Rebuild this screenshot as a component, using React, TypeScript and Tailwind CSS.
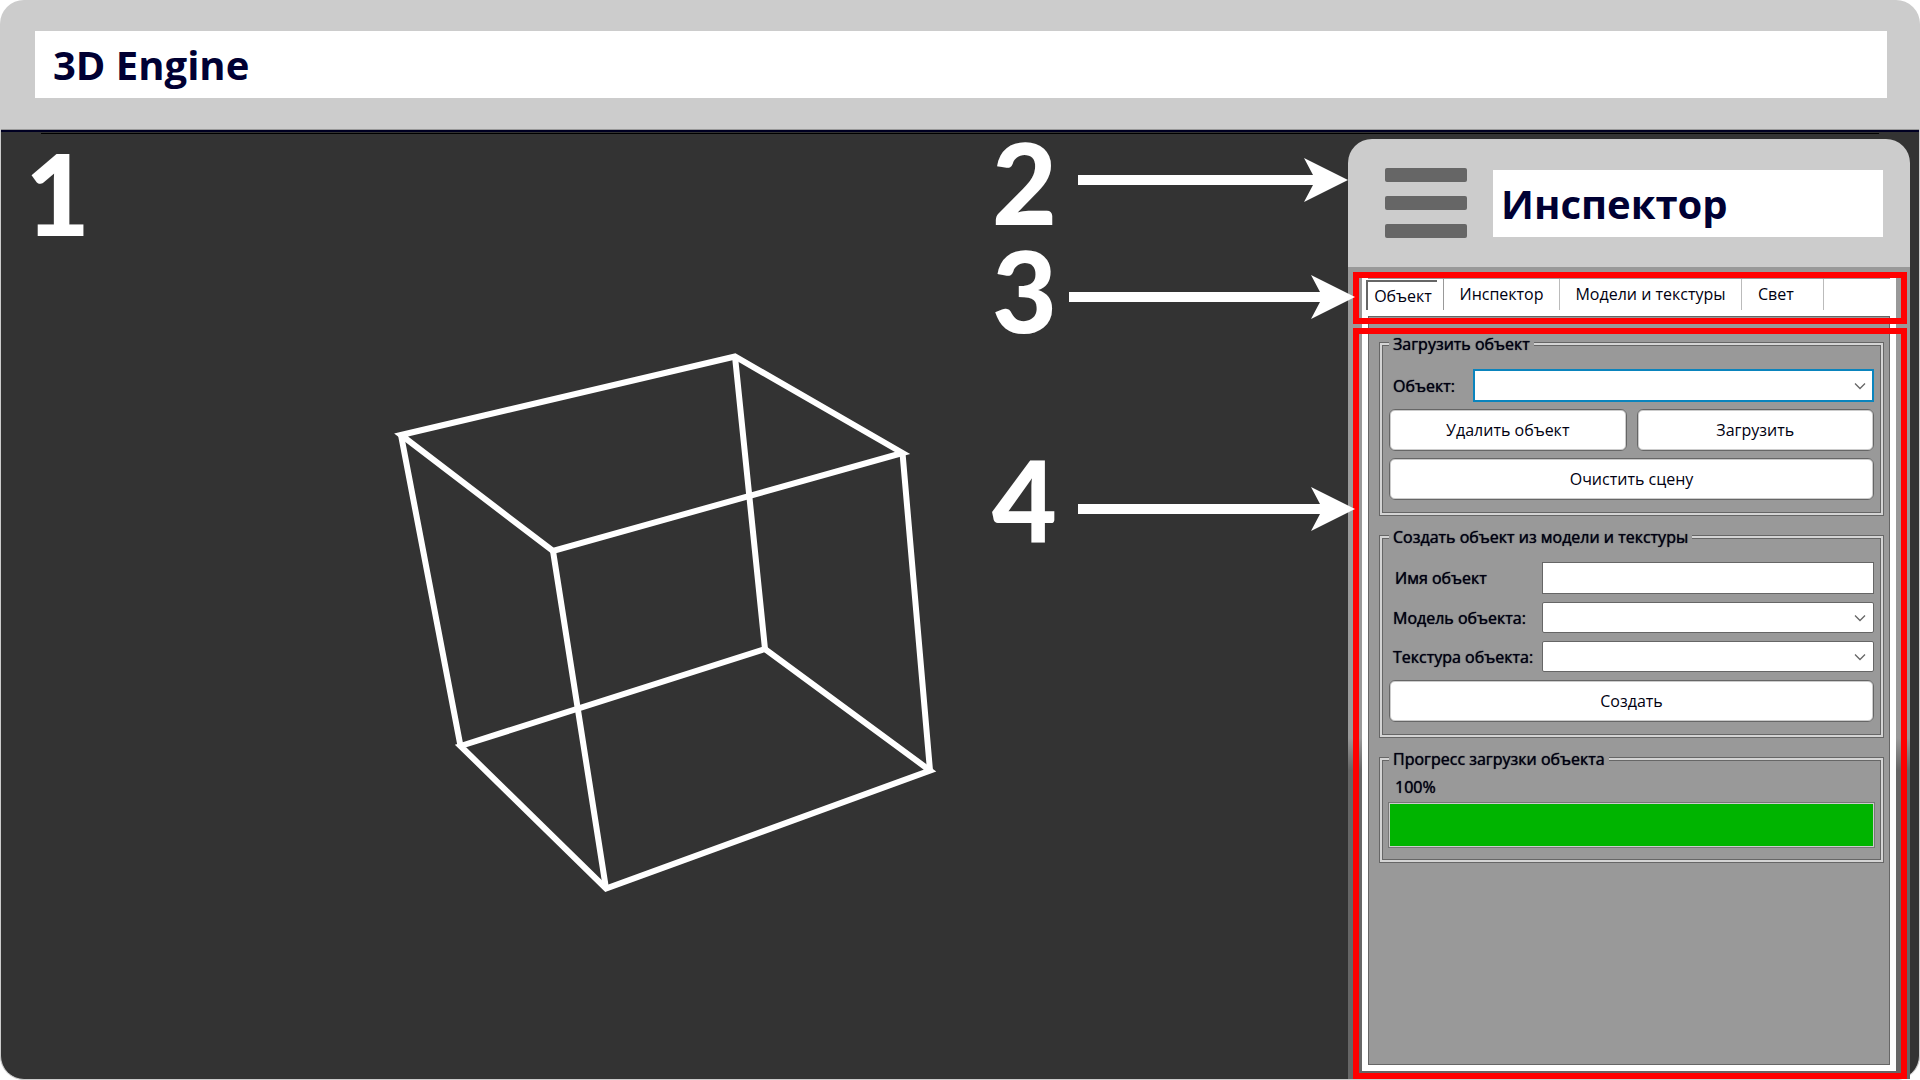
import type { ReactNode } from "react";

const ink = "text-[#000033]";
const heavy = "[text-shadow:0_0_1px_#000011]";

function Chevron() {
  return (
    <svg
      className="pointer-events-none absolute top-1/2 right-2 h-2 w-3 -translate-y-1/2"
      viewBox="0 0 12 8"
      fill="none"
      stroke="#666666"
      aria-hidden="true"
    >
      <path d="M1 1.5 L6 6.5 L11 1.5" strokeWidth="1.3" />
    </svg>
  );
}

function Combo({ id, active = false }: { id: string; active?: boolean }) {
  return (
    <div className="relative min-w-0 flex-1">
      <select
        id={id}
        className={
          active
            ? "block h-[33px] w-full appearance-none border-2 border-[#0a84bd] bg-white px-2 outline-none"
            : "block h-[31px] w-full appearance-none rounded-xs border border-[#666666] bg-white px-2 outline-none"
        }
      >
        <option value=""></option>
      </select>
      <Chevron />
    </div>
  );
}

function PushButton({ children }: { children: ReactNode }) {
  return (
    <button
      type="button"
      className="h-[42px] flex-1 rounded-md border border-[#666666] bg-white text-center shadow-[inset_0_0_0_1px_#cccccc]"
    >
      {children}
    </button>
  );
}

function Group({ title, children }: { title: string; children: ReactNode }) {
  return (
    <fieldset className="min-w-0 border-2 border-[#d4d4d4] px-[7px] pb-[13px] shadow-[0_0_0_1px_#666666,inset_0_0_0_1px_#666666]">
      <legend className={`bg-[#999999] px-1 leading-6 ${heavy}`}>{title}</legend>
      {children}
    </fieldset>
  );
}

function Cube() {
  return (
    <svg
      className="absolute top-[213px] left-[388px] h-[560px] w-[560px]"
      viewBox="390 342 560 560"
      fill="none"
      stroke="#ffffff"
      strokeWidth="6"
      aria-label="Cube"
    >
      <path d="M402 435 L736 356.5 L903.5 453 L554 551 Z" />
      <path d="M461.5 746 L766 649 L931 770.5 L607 888.5 Z" />
      <path d="M402 435 L461.5 746 M736 356.5 L766 649 M903.5 453 L931 770.5 M554 551 L607 888.5" />
    </svg>
  );
}

function LongArrow({ className, length }: { className: string; length: number }) {
  return (
    <svg
      className={className}
      viewBox={`0 0 ${length} 46`}
      width={length}
      height="46"
      fill="#ffffff"
      aria-hidden="true"
    >
      <path
        d={`M0 18 H${length - 35} L${length - 44} 1 L${length} 23 L${length - 44} 45 L${length - 35} 28 H0 Z`}
      />
    </svg>
  );
}

const digit = "absolute font-['Lato'] text-[112px] leading-[96px] font-black text-white";

export default function App() {
  return (
    <div className="flex min-h-screen flex-col bg-white font-['Open_Sans',sans-serif] text-base">
      <header className="rounded-t-[24px] bg-[#cccccc] pt-[31px] pr-[33px] pb-[31px] pl-[35px]">
        <h1 className={`bg-white pl-[18px] text-[40px] leading-[67px] font-bold ${ink}`}>3D Engine</h1>
      </header>

      <main className="relative flex flex-1 justify-end rounded-b-[24px] border border-t-0 border-[#cccccc] bg-[#333333] pr-[9px]">
        <div className="absolute inset-x-0 top-0 h-[3px] border-t border-[#999999] bg-[#000022]" />
        <div className="absolute inset-x-10 top-1 h-px bg-black" />
        <Cube />
        <span className={`${digit} top-4 left-6`}>1</span>

        <aside className="flex w-[562px] flex-col pt-[10px]">
          <div className="flex items-center gap-[26px] rounded-t-[24px] bg-[#cccccc] pt-[29px] pr-[27px] pb-[29px] pl-[37px]">
            <button type="button" aria-label="Menu" className="flex w-[82px] flex-col gap-[14px]">
              <span className="h-[14px] rounded-xs bg-[#666666]" />
              <span className="h-[14px] rounded-xs bg-[#666666]" />
              <span className="h-[14px] rounded-xs bg-[#666666]" />
            </button>
            <h2 className={`flex-1 bg-white pl-2 text-[40px] leading-[67px] font-bold ${ink}`}>
              Инспектор
            </h2>
          </div>

          <div className="relative flex flex-1 flex-col bg-linear-to-b from-[#999999] from-58% to-[#666666] to-62% px-[14px] pt-[11px] pb-2 text-[#000011]">
            <div className="flex flex-1 flex-col bg-white px-[6px] pb-[6px]">
              <nav role="tablist" className="flex h-[38px] items-start border-t border-[#999999] leading-[31px]">
                <button
                  type="button"
                  role="tab"
                  aria-selected="true"
                  className="-ml-0.5 h-[31px] w-[78px] border-r border-[#999999]"
                >
                  <span className="mr-1.5 block h-[30px] border-t-2 border-l-2 border-[#666666] pr-px pl-0.5 leading-7">
                    Объект
                  </span>
                </button>
                <button type="button" role="tab" className="h-[31px] w-[116px] border-r border-[#bbbbbb]">
                  Инспектор
                </button>
                <button type="button" role="tab" className="h-[31px] w-[182px] border-r border-[#bbbbbb]">
                  Модели и текстуры
                </button>
                <button
                  type="button"
                  role="tab"
                  className="h-[31px] w-[82px] border-r border-[#bbbbbb] pl-4 text-left"
                >
                  Свет
                </button>
              </nav>

              <div className="flex flex-1 flex-col gap-2.5 border border-[#666666] bg-[#999999] pt-[15px] pr-[6px] pl-[11px]">
                <Group title="Загрузить объект">
                  <div className="flex flex-col gap-[7px] pt-[13px]">
                    <div className="flex items-center">
                      <label htmlFor="object" className={`w-[84px] pl-1 ${heavy}`}>
                        Объект:
                      </label>
                      <Combo id="object" active />
                    </div>
                    <div className="flex gap-2.5">
                      <PushButton>Удалить объект</PushButton>
                      <PushButton>Загрузить</PushButton>
                    </div>
                    <div className="flex">
                      <PushButton>Очистить сцену</PushButton>
                    </div>
                  </div>
                </Group>

                <Group title="Создать объект из модели и текстуры">
                  <div className="flex flex-col gap-2 pt-[13px]">
                    <div className="flex items-center">
                      <label htmlFor="name" className={`w-[153px] pl-1.5 ${heavy}`}>
                        Имя объект
                      </label>
                      <input
                        id="name"
                        type="text"
                        className="h-8 min-w-0 flex-1 border border-[#666666] bg-white px-2 outline-none"
                      />
                    </div>
                    <div className="flex items-center">
                      <label htmlFor="model" className={`w-[153px] pl-1 ${heavy}`}>
                        Модель объекта:
                      </label>
                      <Combo id="model" />
                    </div>
                    <div className="flex items-center">
                      <label htmlFor="texture" className={`w-[153px] pl-1 whitespace-nowrap ${heavy}`}>
                        Текстура объекта:
                      </label>
                      <Combo id="texture" />
                    </div>
                    <div className="flex">
                      <PushButton>Создать</PushButton>
                    </div>
                  </div>
                </Group>

                <Group title="Прогресс загрузки объекта">
                  <p className={`py-1 pl-1.5 leading-6 ${heavy}`}>100%</p>
                  <div
                    role="progressbar"
                    aria-valuenow={100}
                    aria-label="Прогресс загрузки объекта"
                    className="h-11 border border-[#cccccc] bg-[#00b400] shadow-[0_0_0_1px_#777777]"
                  />
                </Group>
              </div>
            </div>
            <div className="pointer-events-none absolute top-[5px] right-[3px] left-[5px] h-[52px] border-[6px] border-[#ff0000]" />
            <div className="pointer-events-none absolute top-[61px] right-[3px] bottom-0 left-[5px] border-[6px] border-[#ff0000]" />
          </div>
        </aside>

        <span className={`${digit} top-[5px] right-[862px]`}>2</span>
        <span className={`${digit} top-[113px] right-[862px]`}>3</span>
        <span className={`${digit} top-[322px] right-[862px]`}>4</span>
        <LongArrow className="absolute top-[28px] right-[571px]" length={270} />
        <LongArrow className="absolute top-[145px] right-[564px]" length={286} />
        <LongArrow className="absolute top-[357px] right-[564px]" length={277} />
      </main>
    </div>
  );
}
